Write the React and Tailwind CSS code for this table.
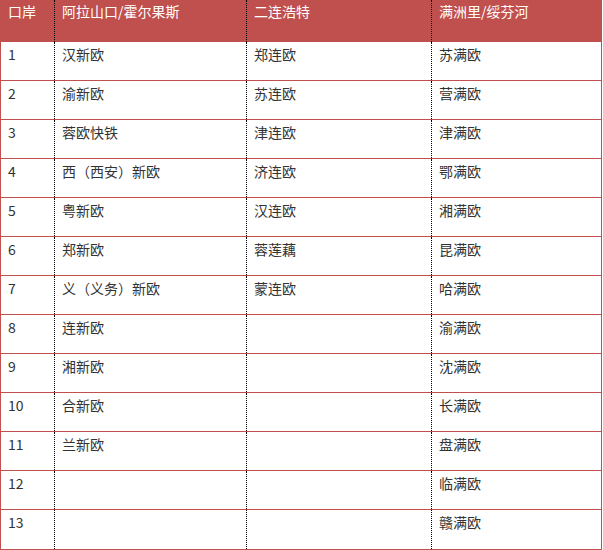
import React from 'react';

const rows = [
  ['1', '汉新欧', '郑连欧', '苏满欧'],
  ['2', '渝新欧', '苏连欧', '营满欧'],
  ['3', '蓉欧快铁', '津连欧', '津满欧'],
  ['4', '西（西安）新欧', '济连欧', '鄂满欧'],
  ['5', '粤新欧', '汉连欧', '湘满欧'],
  ['6', '郑新欧', '蓉莲藕', '昆满欧'],
  ['7', '义（义务）新欧', '蒙连欧', '哈满欧'],
  ['8', '连新欧', '', '渝满欧'],
  ['9', '湘新欧', '', '沈满欧'],
  ['10', '合新欧', '', '长满欧'],
  ['11', '兰新欧', '', '盘满欧'],
  ['12', '', '', '临满欧'],
  ['13', '', '', '赣满欧'],
];

const header = ['口岸', '阿拉山口/霍尔果斯', '二连浩特', '满洲里/绥芬河'];

export default function App() {
  return (
    <div className="w-[603px] h-[550px] bg-white font-['Noto_Sans_CJK_SC','Noto_Sans',sans-serif] text-[14px] leading-[20px]">
      <div className="w-[602px] border-l border-r border-b border-[#c0504d]">
        {/* header */}
        <div className="grid grid-cols-[54px_192px_185px_1fr] h-[42px] bg-[#c0504d] text-white">
          {header.map((h, i) => (
            <div
              key={i}
              className={`pl-[7px] pt-[1px] ${i < 3 ? 'border-r border-dotted border-black' : ''}`}
            >
              {h}
            </div>
          ))}
        </div>
        {rows.map((r, ri) => (
          <div
            key={ri}
            className={`grid grid-cols-[54px_192px_185px_1fr] h-[39px] text-[#333] ${ri < rows.length - 1 ? 'border-b border-[#c0504d]' : ''}`}
          >
            {r.map((c, ci) => (
              <div
                key={ci}
                className={`pl-[7px] pt-[2px] ${ci < 3 ? 'border-r border-dotted border-black' : ''}`}
              >
                {c}
              </div>
            ))}
          </div>
        ))}
      </div>
    </div>
  );
}
